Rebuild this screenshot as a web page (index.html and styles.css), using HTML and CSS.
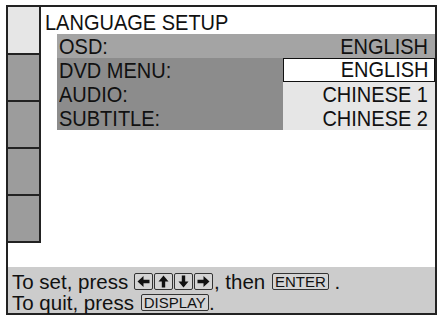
FILE: index.html
```html
<!DOCTYPE html>
<html lang="en">
<head>
  <meta charset="UTF-8">
  <title>Language Setup</title>
  <link rel="stylesheet" href="styles.css">
</head>
<body>
  <div class="screen">
    <div class="upper">
      <div class="side">
        <div class="side-cell active"></div>
        <div class="side-cell"></div>
        <div class="side-cell"></div>
        <div class="side-cell"></div>
        <div class="side-cell"></div>
      </div>

      <div class="main">
        <div class="title"><span class="txt">LANGUAGE SETUP</span></div>
        <div class="menu">
          <div class="row row-top">
            <div class="label"><span class="txt">OSD:</span></div>
            <div class="value"><span class="txt">ENGLISH</span></div>
          </div>
          <div class="row">
            <div class="label"><span class="txt">DVD MENU:</span></div>
            <div class="value selected"><span class="txt">ENGLISH</span></div>
          </div>
          <div class="row">
            <div class="label"><span class="txt">AUDIO:</span></div>
            <div class="value"><span class="txt">CHINESE 1</span></div>
          </div>
          <div class="row">
            <div class="label"><span class="txt">SUBTITLE:</span></div>
            <div class="value"><span class="txt">CHINESE 2</span></div>
          </div>
        </div>
      </div>
    </div>

    <div class="footer">
      <div class="line">To set, press <span class="keys"><span class="key arrow"><svg width="17" height="15" viewBox="0 0 17 15"><path d="M2.5 7.5 L8.5 2 L8.5 5.7 L14.5 5.7 L14.5 9.3 L8.5 9.3 L8.5 13 Z" fill="#111"/></svg></span><span class="key arrow"><svg width="17" height="15" viewBox="0 0 17 15"><path d="M8.5 1.5 L13.5 7.5 L10.2 7.5 L10.2 13.5 L6.8 13.5 L6.8 7.5 L3.5 7.5 Z" fill="#111"/></svg></span><span class="key arrow"><svg width="17" height="15" viewBox="0 0 17 15"><path d="M8.5 13.5 L13.5 7.5 L10.2 7.5 L10.2 1.5 L6.8 1.5 L6.8 7.5 L3.5 7.5 Z" fill="#111"/></svg></span><span class="key arrow"><svg width="17" height="15" viewBox="0 0 17 15"><path d="M14.5 7.5 L8.5 2 L8.5 5.7 L2.5 5.7 L2.5 9.3 L8.5 9.3 L8.5 13 Z" fill="#111"/></svg></span></span>, then <span class="key word">ENTER</span> .</div>
      <div class="line">To quit, press <span class="key word">DISPLAY</span>.</div>
    </div>
  </div>
</body>
</html>
```

FILE: styles.css
```css
body {
  margin: 0;
  background-color: #fff;
  font-family: "Liberation Sans", Arial, sans-serif;
  color: #111;
}

.screen {
  box-sizing: border-box;
  width: 431px;
  height: 310px;
  margin: 5px 0 0 6px;
  border: 2px solid #222;
  display: flex;
  flex-direction: column;
}

.upper {
  height: 260px;
  display: flex;
}

.side {
  width: 31px;
  align-self: flex-start;
  border-right: 2px solid #222;
}

.side-cell {
  height: 45px;
  background-color: #9c9c9c;
  border-bottom: 2px solid #222;
}

.side-cell.active {
  height: 46px;
  background-color: #e6e6e6;
}

.main {
  flex: 1;
  padding-top: 4px;
}

/* the set's font is drawn a little taller than Arial */
.txt {
  display: inline-block;
  transform: scaleY(1.13);
}

.title {
  font-size: 20px;
  line-height: 23px;
  padding-left: 4px;
}

.menu {
  margin-left: 16px;
}

.row {
  display: flex;
  height: 24px;
  font-size: 20px;
  line-height: 24px;
}

.label {
  width: 224px;
  padding-left: 2px;
  background-color: #8c8c8c;
}

.value {
  flex: 1;
  text-align: right;
  padding-right: 7px;
  background-color: #e6e6e6;
}

.row-top .label,
.row-top .value {
  background-color: #a4a4a4;
}

.value.selected {
  background-color: #fff;
  border: 1.5px solid #111;
  line-height: 21px;
  padding-right: 5.5px;
}

.footer {
  flex: 1;
  background-color: #cccccc;
  padding: 4px 0 0 4px;
  font-size: 20.5px;
}

.line {
  line-height: 21px;
  white-space: nowrap;
}

.keys {
  display: inline-block;
}

.key {
  display: inline-block;
  overflow: hidden;
  vertical-align: -1px;
  height: 15px;
  border: 1px solid #333;
  border-radius: 2px;
  background-color: #d4d4d4;
}

.key.arrow {
  width: 17px;
  margin-right: 1px;
}

.key.arrow svg {
  display: block;
}

.key.word {
  font-size: 15px;
  line-height: 15px;
  padding: 0 2px;
  margin-left: 1px;
}
```
